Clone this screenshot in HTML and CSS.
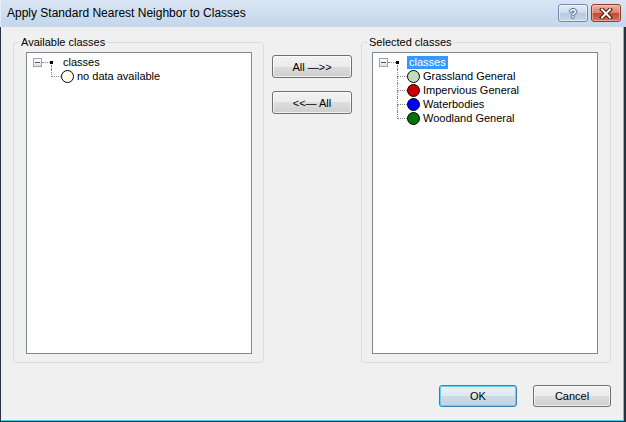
FILE: index.html
```html
<!DOCTYPE html>
<html lang="en">
<head>
    <meta charset="UTF-8">
    <title>Apply Standard Nearest Neighbor to Classes</title>
    <link rel="stylesheet" href="styles.css">
</head>
<body>
    <div class="window">
        <div class="titlebar">
            <span class="title">Apply Standard Nearest Neighbor to Classes</span>
            <div class="caption-buttons">
                <span class="cap-btn help">?</span>
                <span class="cap-btn close">
                    <svg width="14" height="11" viewBox="0 0 14 11">
                        <path d="M3 1.5 L11 9.5 M11 1.5 L3 9.5" stroke="#4a1208" stroke-width="4" stroke-linecap="square"/>
                        <path d="M3 1.5 L11 9.5 M11 1.5 L3 9.5" stroke="#fff" stroke-width="2" stroke-linecap="square"/>
                    </svg>
                </span>
            </div>
        </div>

        <div class="client">
            <div class="panes">
                <fieldset class="group avail">
                    <legend>Available classes</legend>
                    <div class="list">
                        <div class="tree">
                            <div class="row root">
                                <span class="expander"><span class="minus"></span></span>
                                <span class="hline"></span>
                                <span class="node"><span class="sq"></span><span class="tail"></span></span>
                                <span class="label">classes</span>
                            </div>
                            <div class="row child last">
                                <span class="stem"><span class="upper"></span><span class="lower"></span></span>
                                <span class="dot nodata"></span>
                                <span class="label">no data available</span>
                            </div>
                        </div>
                    </div>
                </fieldset>

                <div class="mid">
                    <button class="btn">All —&gt;&gt;</button>
                    <button class="btn">&lt;&lt;— All</button>
                </div>

                <fieldset class="group sel">
                    <legend>Selected classes</legend>
                    <div class="list">
                        <div class="tree">
                            <div class="row root">
                                <span class="expander"><span class="minus"></span></span>
                                <span class="hline"></span>
                                <span class="node"><span class="sq"></span><span class="tail"></span></span>
                                <span class="label selected">classes</span>
                            </div>
                            <div class="row child">
                                <span class="stem"><span class="upper"></span><span class="lower"></span></span>
                                <span class="dot grassland"></span>
                                <span class="label">Grassland General</span>
                            </div>
                            <div class="row child">
                                <span class="stem"><span class="upper"></span><span class="lower"></span></span>
                                <span class="dot impervious"></span>
                                <span class="label">Impervious General</span>
                            </div>
                            <div class="row child">
                                <span class="stem"><span class="upper"></span><span class="lower"></span></span>
                                <span class="dot water"></span>
                                <span class="label">Waterbodies</span>
                            </div>
                            <div class="row child last">
                                <span class="stem"><span class="upper"></span><span class="lower"></span></span>
                                <span class="dot woodland"></span>
                                <span class="label">Woodland General</span>
                            </div>
                        </div>
                    </div>
                </fieldset>
            </div>

            <div class="footer">
                <button class="btn default">OK</button>
                <button class="btn">Cancel</button>
            </div>
        </div>
    </div>
</body>
</html>
```

FILE: styles.css
```css
* {
    box-sizing: border-box;
}
body {
    margin: 0;
    font-family: "Liberation Sans", Arial, sans-serif;
    font-size: 11px;
    color: #000;
    background: #f0f0f0;
}
.window {
    width: 626px;
    height: 422px;
    display: flex;
    flex-direction: column;
}

/* title bar */
.titlebar {
    height: 27px;
    flex: none;
    display: flex;
    justify-content: space-between;
    background: linear-gradient(#d9e5f3, #c4d6eb);
    border-left: 1px solid #e4ecf5;
    padding: 0 5px 0 6px;
}
.title {
    font-size: 12px;
    line-height: 27px;
}
.caption-buttons {
    display: flex;
    gap: 3px;
    margin-top: 4px;
}
.cap-btn {
    width: 30px;
    height: 18px;
    border-radius: 3px;
    display: flex;
    align-items: center;
    justify-content: center;
}
.help {
    border: 1px solid #6f8aad;
    background: linear-gradient(#e2ebf6 0%, #cddbec 48%, #b5c9e2 52%, #c4d6eb 100%);
    box-shadow: inset 0 0 0 1px rgba(255, 255, 255, 0.5);
    font-weight: bold;
    font-size: 13px;
    color: #eef2f7;
    text-shadow: 1px 0 0 #5d6f86, -1px 0 0 #5d6f86, 0 1px 0 #5d6f86, 0 -1px 0 #5d6f86;
}
.close {
    border: 1px solid #8e3a2a;
    background: linear-gradient(#eab3a6 0%, #d8826d 48%, #c5482f 52%, #d4705a 100%);
    box-shadow: inset 0 0 0 1px rgba(255, 220, 210, 0.5);
}

/* client area */
.client {
    flex: 1;
    display: flex;
    flex-direction: column;
    background: #f0f0f0;
    border-left: 1px solid #26323e;
    border-right: 2px solid #26323e;
    border-bottom: 1px solid #26323e;
    box-shadow: inset -1px -1px 0 #55c8ef;
    padding: 9px 13px 14px 12px;
}
.panes {
    display: flex;
    align-items: flex-start;
}

/* group boxes */
.group {
    margin: 0;
    min-width: 0;
    border: 1px solid #d5dfe5;
    border-radius: 3px;
    padding: 3px 0 8px 6px;
}
.group legend {
    padding: 0 1px;
    line-height: 13px;
}
.avail {
    width: 251px;
}
.sel {
    width: 250px;
}
.list {
    width: 226px;
    height: 302px;
    background: #fff;
    border: 1px solid #828790;
}
.avail .list {
    margin-left: 6px;
}
.sel .list {
    margin-left: 4px;
}

/* tree view */
.tree {
    padding: 2px 0 0 6px;
}
.row {
    height: 14px;
    display: flex;
    align-items: center;
}
.expander {
    width: 9px;
    height: 9px;
    border: 1px solid #98a5b9;
    background: linear-gradient(#ffffff, #dde2ea);
    display: flex;
    align-items: center;
    justify-content: center;
}
.minus {
    width: 5px;
    height: 1px;
    background: #3c5a8c;
}
.hline {
    width: 8px;
    border-top: 1px dotted #8a8a8a;
}
.node {
    width: 3px;
    height: 14px;
    display: flex;
    flex-direction: column;
}
.sq {
    height: 3px;
    margin-top: 6px;
    background: #000;
}
.tail {
    flex: 1;
    margin-left: 1px;
    margin-top: 1px;
    border-left: 1px dotted #8a8a8a;
}
.label {
    line-height: 13px;
    padding: 0 2px;
    white-space: nowrap;
}
.root .label {
    margin-left: 8px;
}
.label.selected {
    background: #3399ff;
    color: #fff;
}
.child {
    margin-left: 18px;
}
.stem {
    width: 10px;
    height: 14px;
    display: flex;
    flex-direction: column;
}
.stem .upper {
    height: 8px;
    border-left: 1px dotted #8a8a8a;
    border-bottom: 1px dotted #8a8a8a;
}
.stem .lower {
    flex: 1;
    border-left: 1px dotted #8a8a8a;
}
.last .stem .lower {
    border-left: none;
}
.dot {
    width: 13px;
    height: 13px;
    border-radius: 50%;
    border: 1px solid #000;
    margin-right: 1px;
}
.nodata { background: #fffff0; }
.grassland { background: #c3dbc3; }
.impervious { background: #c80000; }
.water { background: #0000ff; }
.woodland { background: #007400; }

/* buttons */
.btn {
    font-family: "Liberation Sans", Arial, sans-serif;
    font-size: 11px;
    font-weight: normal;
    color: #000;
    border: 1px solid #707070;
    border-radius: 3px;
    background: linear-gradient(#f2f2f2 0%, #ebebeb 50%, #dddddd 50%, #cfcfcf 100%);
    box-shadow: inset 0 0 0 1px rgba(255, 255, 255, 0.7);
    padding: 0;
}
.mid {
    display: flex;
    flex-direction: column;
    gap: 13px;
    padding-top: 19px;
    margin: 0 9px 0 8px;
}
.mid .btn {
    width: 80px;
    height: 23px;
}
.footer {
    display: flex;
    justify-content: flex-end;
    gap: 16px;
    margin-top: 22px;
}
.footer .btn {
    width: 78px;
    height: 22px;
}
.btn.default {
    border-color: #3c7fb1;
    background: linear-gradient(#e9f0f5 0%, #dfe8ef 50%, #cddbe6 50%, #c1d3e1 100%);
    box-shadow: inset 0 0 0 1px #5fd4f8;
}
```
